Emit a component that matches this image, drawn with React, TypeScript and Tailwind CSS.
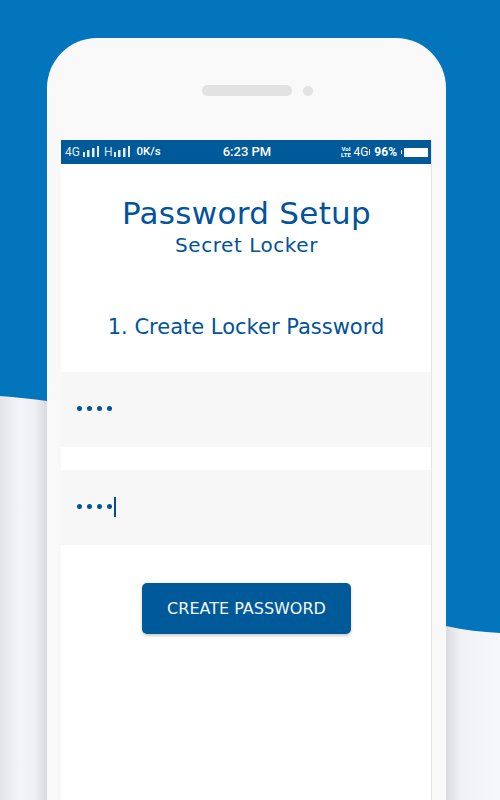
import React from 'react';

function SignalBars() {
  return (
    <svg width="16" height="12" viewBox="0 0 16 12" className="shrink-0">
      <rect x="0" y="6" width="2" height="5" fill="#e3edf5" />
      <rect x="4" y="4" width="2.5" height="7" fill="#e3edf5" />
      <rect x="9" y="2" width="2.5" height="9" fill="#e3edf5" />
      <rect x="14" y="0" width="2" height="11" fill="#e3edf5" />
    </svg>
  );
}

function PasswordDots({ caret }: { caret?: boolean }) {
  return (
    <div className="flex items-center h-[75px] pb-[2px] pl-4 gap-[5px]">
      {[0, 1, 2, 3].map(i => (
        <span key={i} className="w-[5px] h-[5px] rounded-full bg-[#01539a]" />
      ))}
      {caret && <span className="w-[2px] h-[20px] -ml-[3px] bg-[#0b4a92]" />}
    </div>
  );
}

export default function App() {
  return (
    <div className="relative w-[500px] h-[800px] overflow-hidden bg-[#0275bd] font-['DejaVu_Sans',sans-serif]">
      {/* wave behind the phone */}
      <svg width="500" height="800" viewBox="0 0 500 800" className="absolute inset-0">
        <defs>
          <linearGradient id="wave" x1="0" y1="0" x2="500" y2="0" gradientUnits="userSpaceOnUse">
            <stop offset="0" stopColor="#e4e5e8" />
            <stop offset="0.04" stopColor="#f3f4f8" />
            <stop offset="0.07" stopColor="#eff0f3" />
            <stop offset="0.094" stopColor="#d9dadd" />
            <stop offset="0.89" stopColor="#d9dadd" />
            <stop offset="0.92" stopColor="#f0f1f4" />
            <stop offset="1" stopColor="#f6f7fa" />
          </linearGradient>
        </defs>
        <path d="M0 396 C 16 397 32 399 47 401 L 446 626 C 464 630 482 632 500 633 L 500 800 L 0 800 Z" fill="url(#wave)" />
      </svg>

      <div className="relative ml-[47px] mt-[38px] w-[399px] h-[762px] rounded-t-[50px] bg-[#f9f9fa] px-[14px] pt-[102px]">
        {/* speaker and camera */}
        <div className="absolute top-[47px] left-[155px] flex items-center gap-[11px]">
          <div className="w-[90px] h-[11px] rounded-full bg-[#e2e2e3]" />
          <div className="w-[10px] h-[10px] rounded-full bg-[#e2e2e3]" />
        </div>

        <div className="w-[371px] h-[660px] bg-white flex flex-col border-r border-[#e4e6e4]">
          <div className="h-[24px] bg-[#005a9a] flex items-center pl-1 pr-[3px] text-white font-['Roboto',sans-serif] text-[11px] font-medium">
            <span className="font-normal text-[#e3edf5] mr-[3px] text-[12px]">4G</span>
            <SignalBars />
            <span className="font-normal text-[#d7e6f2] ml-[5px] mr-[2px] text-[12px]">H</span>
            <SignalBars />
            <span className="ml-[6px] text-[11.5px]">0K/s</span>
            <span className="ml-[62px] text-[13px]">6:23 PM</span>
            <div className="ml-auto flex items-center">
              <span className="text-[6px] leading-[6px] w-[11px] text-center font-bold">VoI LTE</span>
              <span className="font-normal text-[12px] ml-[2px]">4G</span>
              <span className="w-px h-[6px] bg-white ml-px mr-[4px]" />
              <span className="text-[12px] font-bold">96%</span>
              <span className="w-px h-[4px] bg-white ml-[4px]" />
              <span className="w-[24px] h-[9px] bg-white ml-[2px]" />
            </div>
          </div>

          <h1 className="mt-[30px] pl-px text-center text-[#01539a] text-[31px] leading-[38px] tracking-[0.3px]">Password Setup</h1>
          <h2 className="mt-px pl-px text-center text-[#01539a] text-[20px] leading-[24px] tracking-[0.55px]">Secret Locker</h2>
          <p className="mt-[56px] text-center text-[#01539a] text-[21px] leading-[28px]">1. Create Locker Password</p>

          <div className="mt-[31px] bg-[#f7f7f7]">
            <PasswordDots />
          </div>
          <div className="mt-[23px] bg-[#f7f7f7]">
            <PasswordDots caret />
          </div>

          <button className="mt-[38px] ml-[81px] w-[209px] h-[51px] rounded-[5px] bg-[#005a9a] text-[#f2f6fa] text-[16px] shadow-[0_2px_3px_rgba(0,0,0,0.2)]">
            CREATE PASSWORD
          </button>
        </div>
      </div>
    </div>
  );
}
